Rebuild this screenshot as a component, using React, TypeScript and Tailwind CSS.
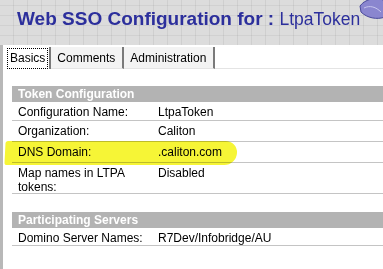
import React from "react";

type Row = { label: string; value: string; h: string };

const tokenRows: Row[] = [
  { label: "Configuration Name:", value: "LtpaToken", h: "h-[19px]" },
  { label: "Organization:", value: "Caliton", h: "h-[21px]" },
  { label: "DNS Domain:", value: ".caliton.com", h: "h-[21px]" },
  { label: "Map names in LTPA tokens:", value: "Disabled", h: "h-[31px]" },
];

const serverRows: Row[] = [
  { label: "Domino Server Names:", value: "R7Dev/Infobridge/AU", h: "h-[18px]" },
];

const SectionHead = ({ title }: { title: string }) => (
  <div className="ml-[9px] h-[16px] bg-[#b3b3b3] pl-[6px] text-[12px] font-bold leading-[16px] text-white">
    {title}
  </div>
);

const Rows = ({ rows }: { rows: Row[] }) => (
  <div className="ml-[9px]">
    {rows.map((r) => (
      <div
        key={r.label}
        className={`flex border-b border-[#c4c4c4] pl-[6px] pt-[3px] text-[12px] leading-[14px] text-black ${r.h}`}
      >
        <div className="w-[140px] shrink-0">{r.label}</div>
        <div>{r.value}</div>
      </div>
    ))}
  </div>
);

export default function App() {
  return (
    <div className="relative h-[269px] w-[383px] overflow-hidden bg-white font-['Liberation_Sans',Arial,sans-serif]">
      {/* header strip */}
      <div className="relative h-[45px] bg-[#dcdcdc] bg-[repeating-linear-gradient(90deg,transparent_0_13px,rgba(0,0,0,0.06)_13px_14px),repeating-linear-gradient(0deg,transparent_0_9px,rgba(0,0,0,0.05)_9px_10px)] pl-[17px] pt-[7px]">
        <span className="text-[19px] font-bold leading-[24px] text-[#2c2f9c]">
          Web SSO Configuration for :{" "}
        </span>
        <span className="text-[17.5px] leading-[24px] text-[#2c2f9c]">LtpaToken</span>
        <svg className="absolute right-0 top-0" width="24" height="22" viewBox="0 0 24 22">
          <path d="M1 6 C6 -1 18 -4 26 1 L26 17 C18 20 8 18 2 12 Z" fill="#8a86cf" stroke="#4a4a9a" strokeWidth="1" />
          <path d="M5 8 C11 5 17 7 22 12" fill="none" stroke="#c8c6ee" strokeWidth="1" />
        </svg>
      </div>

      <div className="flex h-[224px] border-l-[3px] border-[#b8b8b8]">
        <div className="flex-1">
          {/* tabs */}
          <div className="flex h-[24px] pt-[2px] text-[12px] text-black">
            <div className="ml-[4px] flex h-[22px] items-center border-r-2 border-[#7a7a7a] bg-white pr-[1px]">
              <span className="flex h-[21px] items-center border border-dotted border-black px-[2px]">
                Basics
              </span>
            </div>
            <div className="flex h-[22px] w-[73px] items-center border-r-2 border-[#7a7a7a] border-b border-b-[#e4e4e4] bg-[#f3f3f3] pl-[6px]">
              Comments
            </div>
            <div className="flex h-[22px] w-[91px] items-center border-r-2 border-[#7a7a7a] border-b border-b-[#e4e4e4] bg-[#f3f3f3] pl-[6px]">
              Administration
            </div>
            <div className="h-[22px] flex-1 border-b border-[#e4e4e4]" />
          </div>

          <div className="relative mt-[17px]">
            <SectionHead title="Token Configuration" />
            <Rows rows={tokenRows} />
            {/* highlighter mark */}
            <div className="absolute left-[2px] top-[55px] h-[24px] w-[232px] -skew-x-3 rounded-r-[14px] rounded-l-[3px] bg-[#f6f536] mix-blend-multiply" />

            <div className="mt-[18px]">
              <SectionHead title="Participating Servers" />
              <Rows rows={serverRows} />
            </div>
          </div>
        </div>
      </div>
    </div>
  );
}
